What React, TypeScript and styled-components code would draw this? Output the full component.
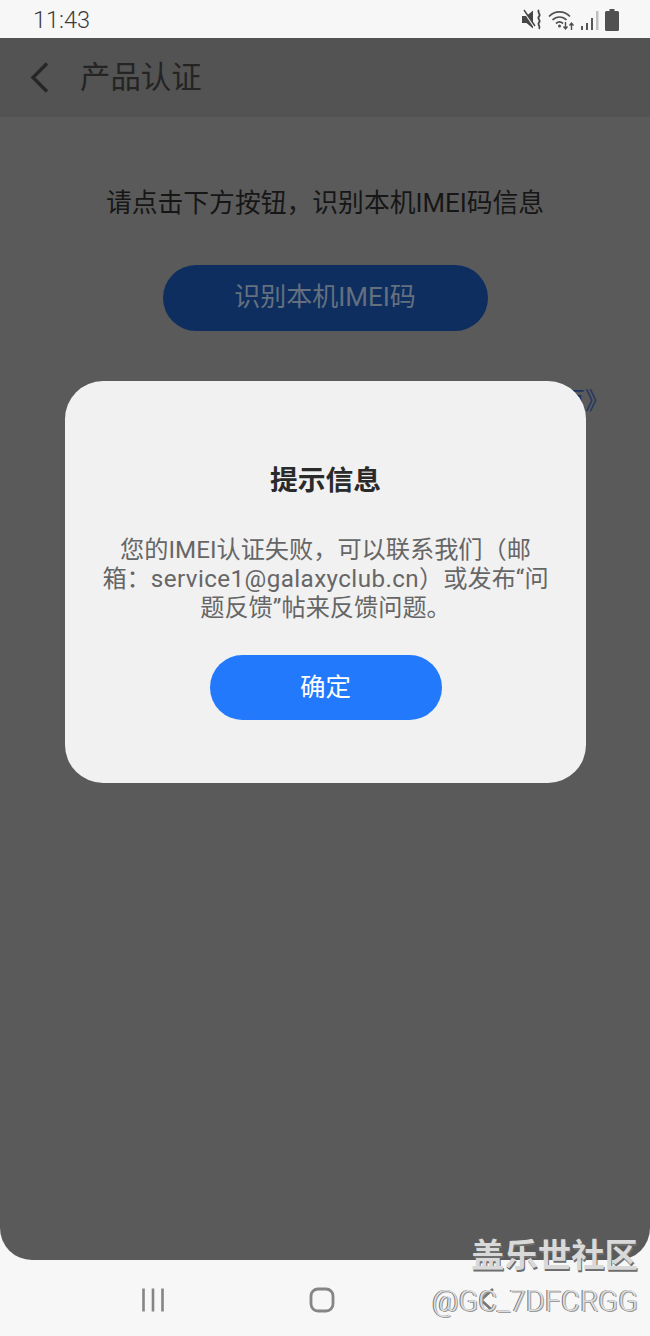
import React from "react";
import styled, { createGlobalStyle } from "styled-components";

const FONT = `Roboto, "Noto Sans CJK SC", sans-serif`;

const GlobalStyle = createGlobalStyle`
  html, body {
    margin: 0;
    padding: 0;
    background: #f7f7f7;
  }
  * {
    box-sizing: border-box;
  }
`;

const Page = styled.div`
  position: relative;
  width: 650px;
  height: 1336px;
  display: flex;
  flex-direction: column;
  overflow: hidden;
  background: #f7f7f7;
  font-family: ${FONT};
`;

const StatusBar = styled.div`
  height: 38px;
  flex: none;
  display: flex;
  align-items: center;
  justify-content: space-between;
  padding: 1px 31px 0 33px;
`;

const Time = styled.span`
  font-size: 23.5px;
  font-weight: 300;
  color: #3c3c3c;
`;

const StatusIcons = styled.div`
  display: flex;
  align-items: center;
  gap: 5px;

  svg {
    flex: none;
  }
`;

const Screen = styled.div`
  position: relative;
  height: 1222px;
  flex: none;
  background: #5a5a5a;
  border-radius: 0 0 32px 32px;
  display: flex;
  flex-direction: column;
  align-items: center;
`;

const Header = styled.div`
  align-self: stretch;
  height: 79px;
  display: flex;
  align-items: center;
  gap: 28px;
  padding-left: 28px;
  background: #535353;
`;

const HeaderTitle = styled.span`
  font-size: 30.4px;
  color: #242424;
  margin-top: -5px;
`;

const Instruction = styled.div`
  margin-top: 68px;
  font-size: 25.8px;
  line-height: 36px;
  color: #161616;
  white-space: nowrap;
`;

const IdentifyButton = styled.div`
  margin-top: 44px;
  width: 325px;
  height: 66px;
  padding-bottom: 7px;
  border-radius: 33px;
  background: #0d2e5f;
  color: #65707f;
  font-size: 26px;
  display: flex;
  align-items: center;
  justify-content: center;
`;

const TermsRow = styled.div`
  align-self: stretch;
  margin-top: 52px;
  padding-right: 41px;
  display: flex;
  justify-content: flex-end;
  font-size: 24px;
  line-height: 36px;
  color: #1c3563;
  white-space: nowrap;
`;

const Dialog = styled.div`
  position: absolute;
  left: 65px;
  top: 381px;
  width: 521px;
  height: 402px;
  border-radius: 38px;
  background: #f1f1f2;
  display: flex;
  flex-direction: column;
  align-items: center;
  padding-top: 81px;
`;

const DialogTitle = styled.div`
  font-size: 27.8px;
  line-height: 38px;
  font-weight: 700;
  color: #2a2a2a;
`;

const DialogBody = styled.div`
  margin-top: 36px;
  width: 456px;
  font-size: 24.2px;
  line-height: 29px;
  text-align: center;
  color: #666;
`;

const Email = styled.span`
  letter-spacing: 0.42px;
`;

const ConfirmButton = styled.div`
  margin-top: 32px;
  width: 232px;
  height: 65px;
  padding-bottom: 7px;
  border-radius: 33px;
  background: #2279fb;
  color: #fff;
  font-size: 25.5px;
  display: flex;
  align-items: center;
  justify-content: center;
`;

const NavBar = styled.div`
  flex: 1;
  display: flex;
  align-items: center;
  padding: 3px 0 0 141px;
  gap: 144px;

  svg {
    flex: none;
  }
`;

const NavGroup = styled.div`
  display: flex;
  align-items: center;
  gap: 143px;
`;

const Watermark = styled.div`
  position: absolute;
  right: 12px;
  top: 1233px;
  display: flex;
  flex-direction: column;
  align-items: flex-end;
  gap: 4px;
`;

const WatermarkTitle = styled.span`
  font-size: 33.4px;
  line-height: 46px;
  font-weight: 700;
  color: #d9d9d9;
  text-shadow: 1px 2px 0 #6f6f6f;
`;

const WatermarkUser = styled.span`
  font-size: 29px;
  line-height: 36px;
  font-weight: 300;
  color: #dedede;
  text-shadow: -1px 0 0 #747474, 1px 1px 0 #9c9c9c;
  white-space: nowrap;
`;

const MuteIcon = () => (
  <svg width="21" height="21" viewBox="0 0 21 21">
    <path d="M0 7h4.500L11 1.500v18L4.500 14H0z" fill="#464646" />
    <path d="M1 1l12 18" stroke="#f7f7f7" strokeWidth="1.600" />
    <path d="M2 1l11 16" stroke="#464646" strokeWidth="1.400" />
    <path d="M17 1c-2.500 2.500 2.500 4 0 6.500s2.500 3.500 0 6 2.500 3.500 0 6.500" fill="none" stroke="#464646" strokeWidth="1.800" />
  </svg>
);

const WifiIcon = () => (
  <svg width="27" height="22" viewBox="0 0 27 22" fill="none" stroke="#505050">
    <path d="M1 7.500c5.800-6.200 15.200-6.200 21 0" strokeWidth="1.700" />
    <path d="M4.500 11c4-4 10-4 14 0" strokeWidth="1.700" />
    <path d="M8 14.500c2.200-2 4.800-2 7 0" strokeWidth="1.700" />
    <circle cx="11.500" cy="17" r="1.500" fill="#505050" stroke="none" />
    <path d="M17.500 13v7M15.500 17.500l2 2.500 2-2.500" strokeWidth="1.400" />
    <path d="M23.500 21v-7M21.500 16.500l2-2.500 2 2.500" strokeWidth="1.400" />
  </svg>
);

const SignalIcon = () => (
  <svg width="20" height="22" viewBox="0 0 20 22">
    <rect x="1" y="17" width="2" height="4" fill="#555" />
    <rect x="6" y="14" width="2" height="7" fill="#555" />
    <rect x="11" y="9" width="2" height="12" fill="#555" />
    <rect x="16" y="2" width="2.500" height="19" fill="#c0c0c0" />
  </svg>
);

const BatteryIcon = () => (
  <svg width="14" height="22" viewBox="0 0 14 22">
    <path d="M4.500 0h5v2h3q1.500 0 1.500 1.500v17q0 1.500-1.500 1.500h-11Q0 22 0 20.500v-17Q0 2 1.500 2h3z" fill="#505050" />
  </svg>
);

const BackIcon = () => (
  <svg width="24" height="34" viewBox="0 0 24 34" fill="none">
    <path d="M19 2.500L5 16.500l14 14" stroke="#262626" strokeWidth="3.400" />
  </svg>
);

const RecentsIcon = () => (
  <svg width="24" height="26" viewBox="0 0 24 26" fill="none" stroke="#858585" strokeWidth="2.600">
    <path d="M2.500 1.500v23M12 1.500v23M21.500 1.500v23" />
  </svg>
);

const HomeIcon = () => (
  <svg width="26" height="26" viewBox="0 0 26 26" fill="none">
    <rect x="2" y="2" width="22" height="22" rx="7" stroke="#858585" strokeWidth="2.800" />
  </svg>
);

const NavBackIcon = () => (
  <svg width="18" height="26" viewBox="0 0 18 26" fill="none">
    <path d="M15 2L3 13l12 11" stroke="#777" strokeWidth="2.800" />
  </svg>
);

export default function App() {
  return (
    <Page>
      <GlobalStyle />
      <StatusBar>
        <Time>11:43</Time>
        <StatusIcons>
          <MuteIcon />
          <WifiIcon />
          <SignalIcon />
          <BatteryIcon />
        </StatusIcons>
      </StatusBar>
      <Screen>
        <Header>
          <BackIcon />
          <HeaderTitle>产品认证</HeaderTitle>
        </Header>
        <Instruction>请点击下方按钮，识别本机IMEI码信息</Instruction>
        <IdentifyButton>识别本机IMEI码</IdentifyButton>
        <TermsRow>《产品认证服务条款页》</TermsRow>
      </Screen>
      <NavBar>
        <RecentsIcon />
        <NavGroup>
          <HomeIcon />
          <NavBackIcon />
        </NavGroup>
      </NavBar>
      <Dialog>
        <DialogTitle>提示信息</DialogTitle>
        <DialogBody>
          您的IMEI认证失败，可以联系我们（邮箱：<Email>service1@galaxyclub.cn</Email>）或发布“问题反馈”帖来反馈问题。
        </DialogBody>
        <ConfirmButton>确定</ConfirmButton>
      </Dialog>
      <Watermark>
        <WatermarkTitle>盖乐世社区</WatermarkTitle>
        <WatermarkUser>@GC_7DFCRGG</WatermarkUser>
      </Watermark>
    </Page>
  );
}
